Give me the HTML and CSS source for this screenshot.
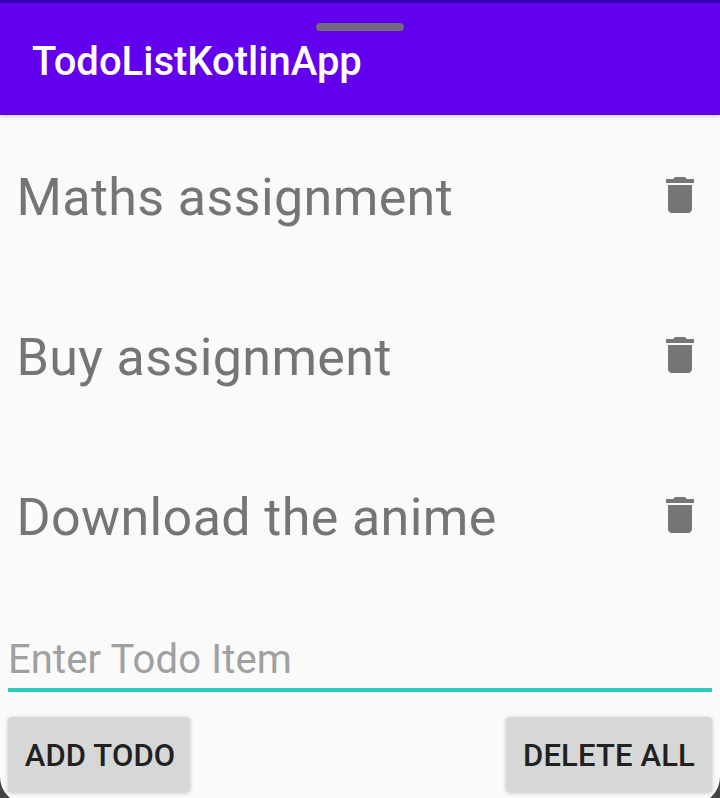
FILE: index.html
```html
<!DOCTYPE html>
<html lang="en">
<head>
<meta charset="utf-8">
<title>TodoListKotlinApp</title>
<link rel="stylesheet" href="styles.css">
</head>
<body>
<svg class="defs" aria-hidden="true"><symbol id="trash" viewBox="0 0 24 24"><path d="M6 19c0 1.1.9 2 2 2h8c1.100 0 2-.9 2-2V7H6v12zM19 4h-3.500l-1-1h-5l-1 1H5v2h14V4z"/></symbol></svg>
<div class="screen">
  <header class="bar"><span class="handle"></span><h1 class="title">TodoListKotlinApp</h1></header>
  <ul class="list">
    <li class="item"><span class="label">Maths assignment</span><svg class="icon"><use href="#trash"/></svg></li>
    <li class="item"><span class="label">Buy assignment</span><svg class="icon"><use href="#trash"/></svg></li>
    <li class="item"><span class="label">Download the anime</span><svg class="icon"><use href="#trash"/></svg></li>
  </ul>
  <div class="field">Enter Todo Item</div>
  <div class="actions"><button class="btn add">ADD TODO</button><button class="btn delete">DELETE ALL</button></div>
</div>
</body>
</html>
```
FILE: styles.css
```css
* { box-sizing: border-box; }
html { background: #444; }
body { margin: 0; height: 798px; overflow: hidden; font-family: Roboto, sans-serif; }
.defs { position: absolute; width: 0; height: 0; }
.screen { height: 804px; background: #fafafa; border-radius: 0 0 27px 27px; overflow: hidden; display: flex; flex-direction: column; }
.bar { position: relative; height: 115px; flex: none; background: #6200ee; border-top: 3px solid #3700b3; box-shadow: 0 1px 5px rgba(0,0,0,.2); padding: 35px 0 0 32px; }
.handle { position: absolute; left: 316px; top: 20px; width: 88px; height: 8px; border-radius: 4px; background: #74677e; }
.title { margin: 0; font-size: 40px; line-height: 48px; font-weight: 500; color: #fff; }
.list { margin: 0; padding: 0; list-style: none; }
.item { height: 160px; display: flex; align-items: center; justify-content: space-between; padding: 0 16px 0 16.5px; }
.label { padding-top: 5px; font-size: 52px; line-height: 62px; letter-spacing: .38px; color: #757575; white-space: nowrap; }
.icon { width: 48px; height: 48px; fill: #757575; }
.field { margin: 37px 8px 0; height: 60px; padding-top: 4px; flex: none; border-bottom: 4px solid #2bc9bb; font-size: 40px; line-height: 48px; letter-spacing: .12px; color: #a0a0a0; }
.actions { display: flex; justify-content: space-between; padding: 25px 8px 0; }
.btn { height: 75px; border: 0; padding: 2px 0 0; border-radius: 4px; background: #d6d8d7; color: #212121; font: 500 31px Roboto, sans-serif; letter-spacing: .15px; box-shadow: 0 1px 4px rgba(0,0,0,.22); }
.add { width: 182px; padding-left: 2px; }
.delete { width: 206px; }
```
